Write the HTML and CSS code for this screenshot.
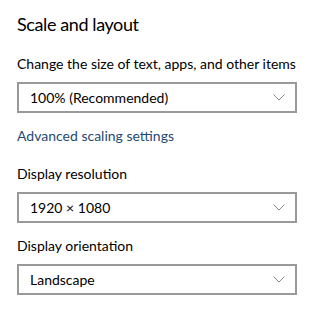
FILE: index.html
```html
<!DOCTYPE html>
<html lang="en">
<head>
    <meta charset="UTF-8">
    <meta name="viewport" content="width=device-width, initial-scale=1.0">
    <title>Scale and layout</title>
    <link rel="stylesheet" href="styles.css">
</head>
<body>
    <main class="page">
        <h1 class="title">Scale and layout</h1>

        <p class="label first">Change the size of text, apps, and other items</p>
        <div class="combo">
            <span>100% (Recommended)</span>
            <svg class="chevron" width="12" height="7" viewBox="0 0 12 7"><path d="M0.5 0.5 L6 6 L11.5 0.5" fill="none" stroke="#8a8a8a" stroke-width="1"/></svg>
        </div>

        <a class="link" href="#">Advanced scaling settings</a>

        <p class="label">Display resolution</p>
        <div class="combo">
            <span>1920 × 1080</span>
            <svg class="chevron" width="12" height="7" viewBox="0 0 12 7"><path d="M0.5 0.5 L6 6 L11.5 0.5" fill="none" stroke="#8a8a8a" stroke-width="1"/></svg>
        </div>

        <p class="label near">Display orientation</p>
        <div class="combo">
            <span>Landscape</span>
            <svg class="chevron" width="12" height="7" viewBox="0 0 12 7"><path d="M0.5 0.5 L6 6 L11.5 0.5" fill="none" stroke="#8a8a8a" stroke-width="1"/></svg>
        </div>
    </main>
</body>
</html>
```

FILE: styles.css
```css
*{
    box-sizing: border-box;
}
body{
    margin: 0;
    background: #fff;
    color: #000;
    font-family: Lato, "Open Sans", sans-serif;
}
.page{
    display: flex;
    flex-direction: column;
    align-items: flex-start;
    padding: 10px 0 0 17px;
    width: 317px;
}
.title{
    margin: 0;
    font-size: 18px;
    font-weight: 400;
    letter-spacing: -0.4px;
    line-height: 28px;
}
.label{
    margin: 18px 0 8px;
    font-size: 14px;
    line-height: 20px;
    white-space: nowrap;
}
.label.first{
    margin-top: 16px;
}
.label.near{
    margin-top: 13px;
}
.combo{
    display: flex;
    align-items: center;
    justify-content: space-between;
    width: 280px;
    height: 31px;
    padding: 0 10px 0 11px;
    border: 2px solid #999;
    font-size: 14px;
    line-height: 20px;
}
.chevron{
    display: block;
}
.link{
    margin-top: 13px;
    font-size: 14px;
    line-height: 20px;
    color: #1f4b73;
    text-decoration: none;
}
```
